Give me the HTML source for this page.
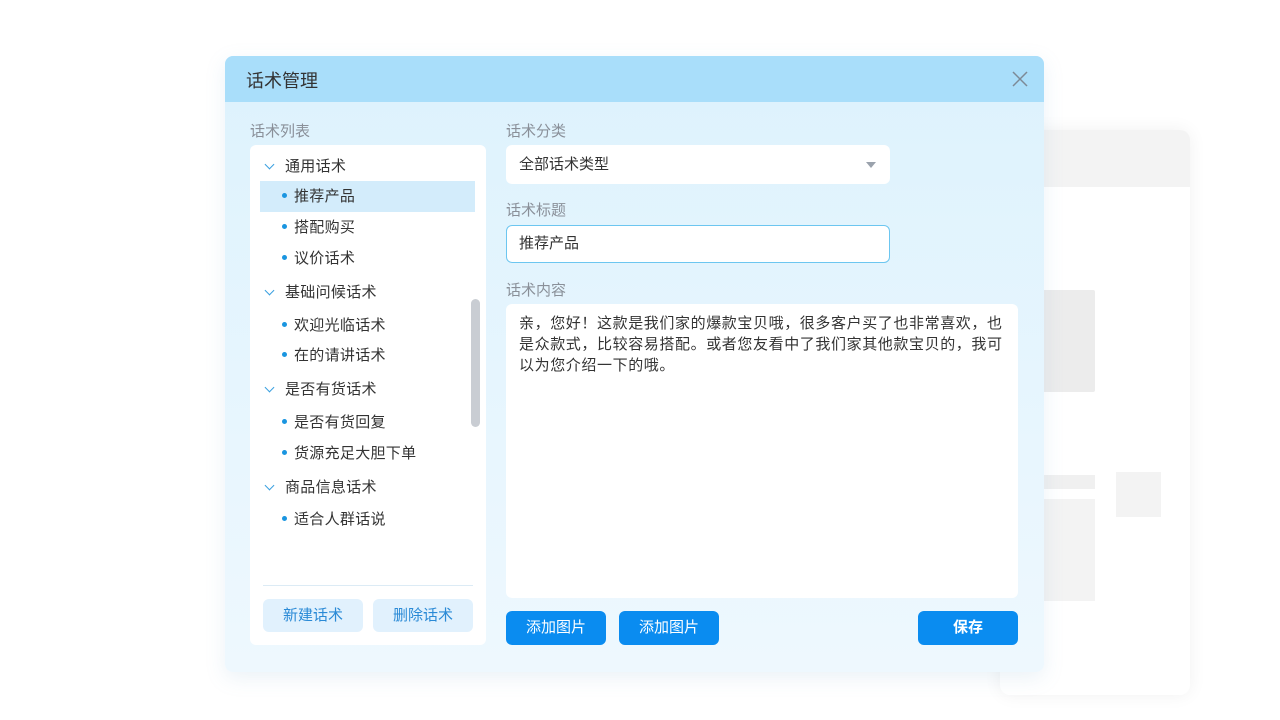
<!DOCTYPE html><html><head><meta charset="utf-8"><style>
*{margin:0;padding:0;box-sizing:border-box}
body{width:1280px;height:720px;background:#fff;position:relative;overflow:hidden;font-family:"Liberation Sans","Noto Sans CJK SC",sans-serif;color:#333}
.a{position:absolute}
.bg{left:1000px;top:130px;width:190px;height:565px;background:#fff;border-radius:10px;box-shadow:0 0 18px rgba(0,0,0,.06);overflow:hidden}
.dlg{left:225px;top:56px;width:819px;height:616px;border-radius:8px;background:linear-gradient(#ddf2fd,#eef8fe);box-shadow:0 6px 20px rgba(120,170,200,.15);overflow:hidden}
.hd{left:0;top:0;width:819px;height:46px;background:#a9defa}
.lbl{font-size:15px;color:#8a9099}
.panel{background:#fff;border-radius:6px}
.it{position:absolute;left:10px;width:215px;height:30px;font-size:15px;line-height:30px;color:#333;letter-spacing:0.3px}
.dot{display:inline-block;width:5px;height:5px;border-radius:50%;background:#1a95e0;margin:0 7px 3px 22px;vertical-align:middle}
.car{display:inline-block;width:7px;height:7px;border-right:1.5px solid #3aa0e0;border-bottom:1.5px solid #3aa0e0;transform:rotate(45deg);margin:0 12px 5px 6px;vertical-align:middle}
.btn{border-radius:6px;font-size:15px;text-align:center;line-height:34px}
.pb{background:#0a8cf0;color:#fff}
.lb{background:#e1f1fd;color:#2a8ad6}
</style></head><body>
<div class="a bg">
<div class="a" style="left:0;top:0;width:190px;height:57px;background:#f3f3f3"></div>
<div class="a" style="left:40px;top:160px;width:55px;height:102px;background:#ececec;border-radius:2px"></div>
<div class="a" style="left:40px;top:345px;width:55px;height:14px;background:#f0f0f0"></div>
<div class="a" style="left:40px;top:369px;width:55px;height:102px;background:#f3f3f3"></div>
<div class="a" style="left:116px;top:342px;width:45px;height:45px;background:#f3f3f3"></div>
</div>
<div class="a dlg">
<div class="a hd"></div>
<div class="a" style="left:21px;top:11px;font-size:18px;color:#333">话术管理</div>
<svg class="a" style="left:786px;top:14px" width="18" height="18"><path d="M2 2L16 16M16 2L2 16" stroke="#7d8a96" stroke-width="1.5"/></svg>
<div class="a lbl" style="left:25px;top:64px">话术列表</div>
<div class="a panel" style="left:25px;top:89px;width:236px;height:500px">
<div class="a" style="left:10px;top:36px;width:215px;height:31px;background:#d3ecfb"></div>
<div class="it" style="top:7px"><span class="car"></span>通用话术</div>
<div class="it" style="top:37px"><span class="dot"></span>推荐产品</div>
<div class="it" style="top:68px"><span class="dot"></span>搭配购买</div>
<div class="it" style="top:99px"><span class="dot"></span>议价话术</div>
<div class="it" style="top:133px"><span class="car"></span>基础问候话术</div>
<div class="it" style="top:166px"><span class="dot"></span>欢迎光临话术</div>
<div class="it" style="top:196px"><span class="dot"></span>在的请讲话术</div>
<div class="it" style="top:230px"><span class="car"></span>是否有货话术</div>
<div class="it" style="top:263px"><span class="dot"></span>是否有货回复</div>
<div class="it" style="top:294px"><span class="dot"></span>货源充足大胆下单</div>
<div class="it" style="top:328px"><span class="car"></span>商品信息话术</div>
<div class="it" style="top:360px"><span class="dot"></span>适合人群话说</div>
<div class="a" style="left:221px;top:154px;width:9px;height:128px;background:#c9cdd3;border-radius:5px"></div>
<div class="a" style="left:13px;top:440px;width:210px;height:1px;background:#dcebf5"></div>
<div class="a btn lb" style="left:13px;top:454px;width:100px;height:33px">新建话术</div>
<div class="a btn lb" style="left:123px;top:454px;width:100px;height:33px">删除话术</div>
</div>
<div class="a lbl" style="left:281px;top:64px">话术分类</div>
<div class="a panel" style="left:281px;top:89px;width:384px;height:39px;font-size:15px;line-height:39px;padding-left:13px">全部话术类型
<div class="a" style="right:14px;top:17px;border-left:5px solid transparent;border-right:5px solid transparent;border-top:6px solid #9aa2ac"></div></div>
<div class="a lbl" style="left:281px;top:143px">话术标题</div>
<div class="a panel" style="left:281px;top:169px;width:384px;height:38px;border:1px solid #6cc6f0;font-size:15px;line-height:36px;padding-left:12px">推荐产品</div>
<div class="a lbl" style="left:281px;top:223px">话术内容</div>
<div class="a panel" style="left:281px;top:248px;width:512px;height:294px;padding:9px 13px;font-size:15px;line-height:21px;color:#333;letter-spacing:0.6px">亲，您好！这款是我们家的爆款宝贝哦，很多客户买了也非常喜欢，也是众款式，比较容易搭配。或者您友看中了我们家其他款宝贝的，我可以为您介绍一下的哦。</div>
<div class="a btn pb" style="left:281px;top:555px;width:100px;height:34px">添加图片</div>
<div class="a btn pb" style="left:394px;top:555px;width:100px;height:34px">添加图片</div>
<div class="a btn pb" style="left:693px;top:555px;width:100px;height:34px;font-weight:bold">保存</div>
</div>
</body></html>
